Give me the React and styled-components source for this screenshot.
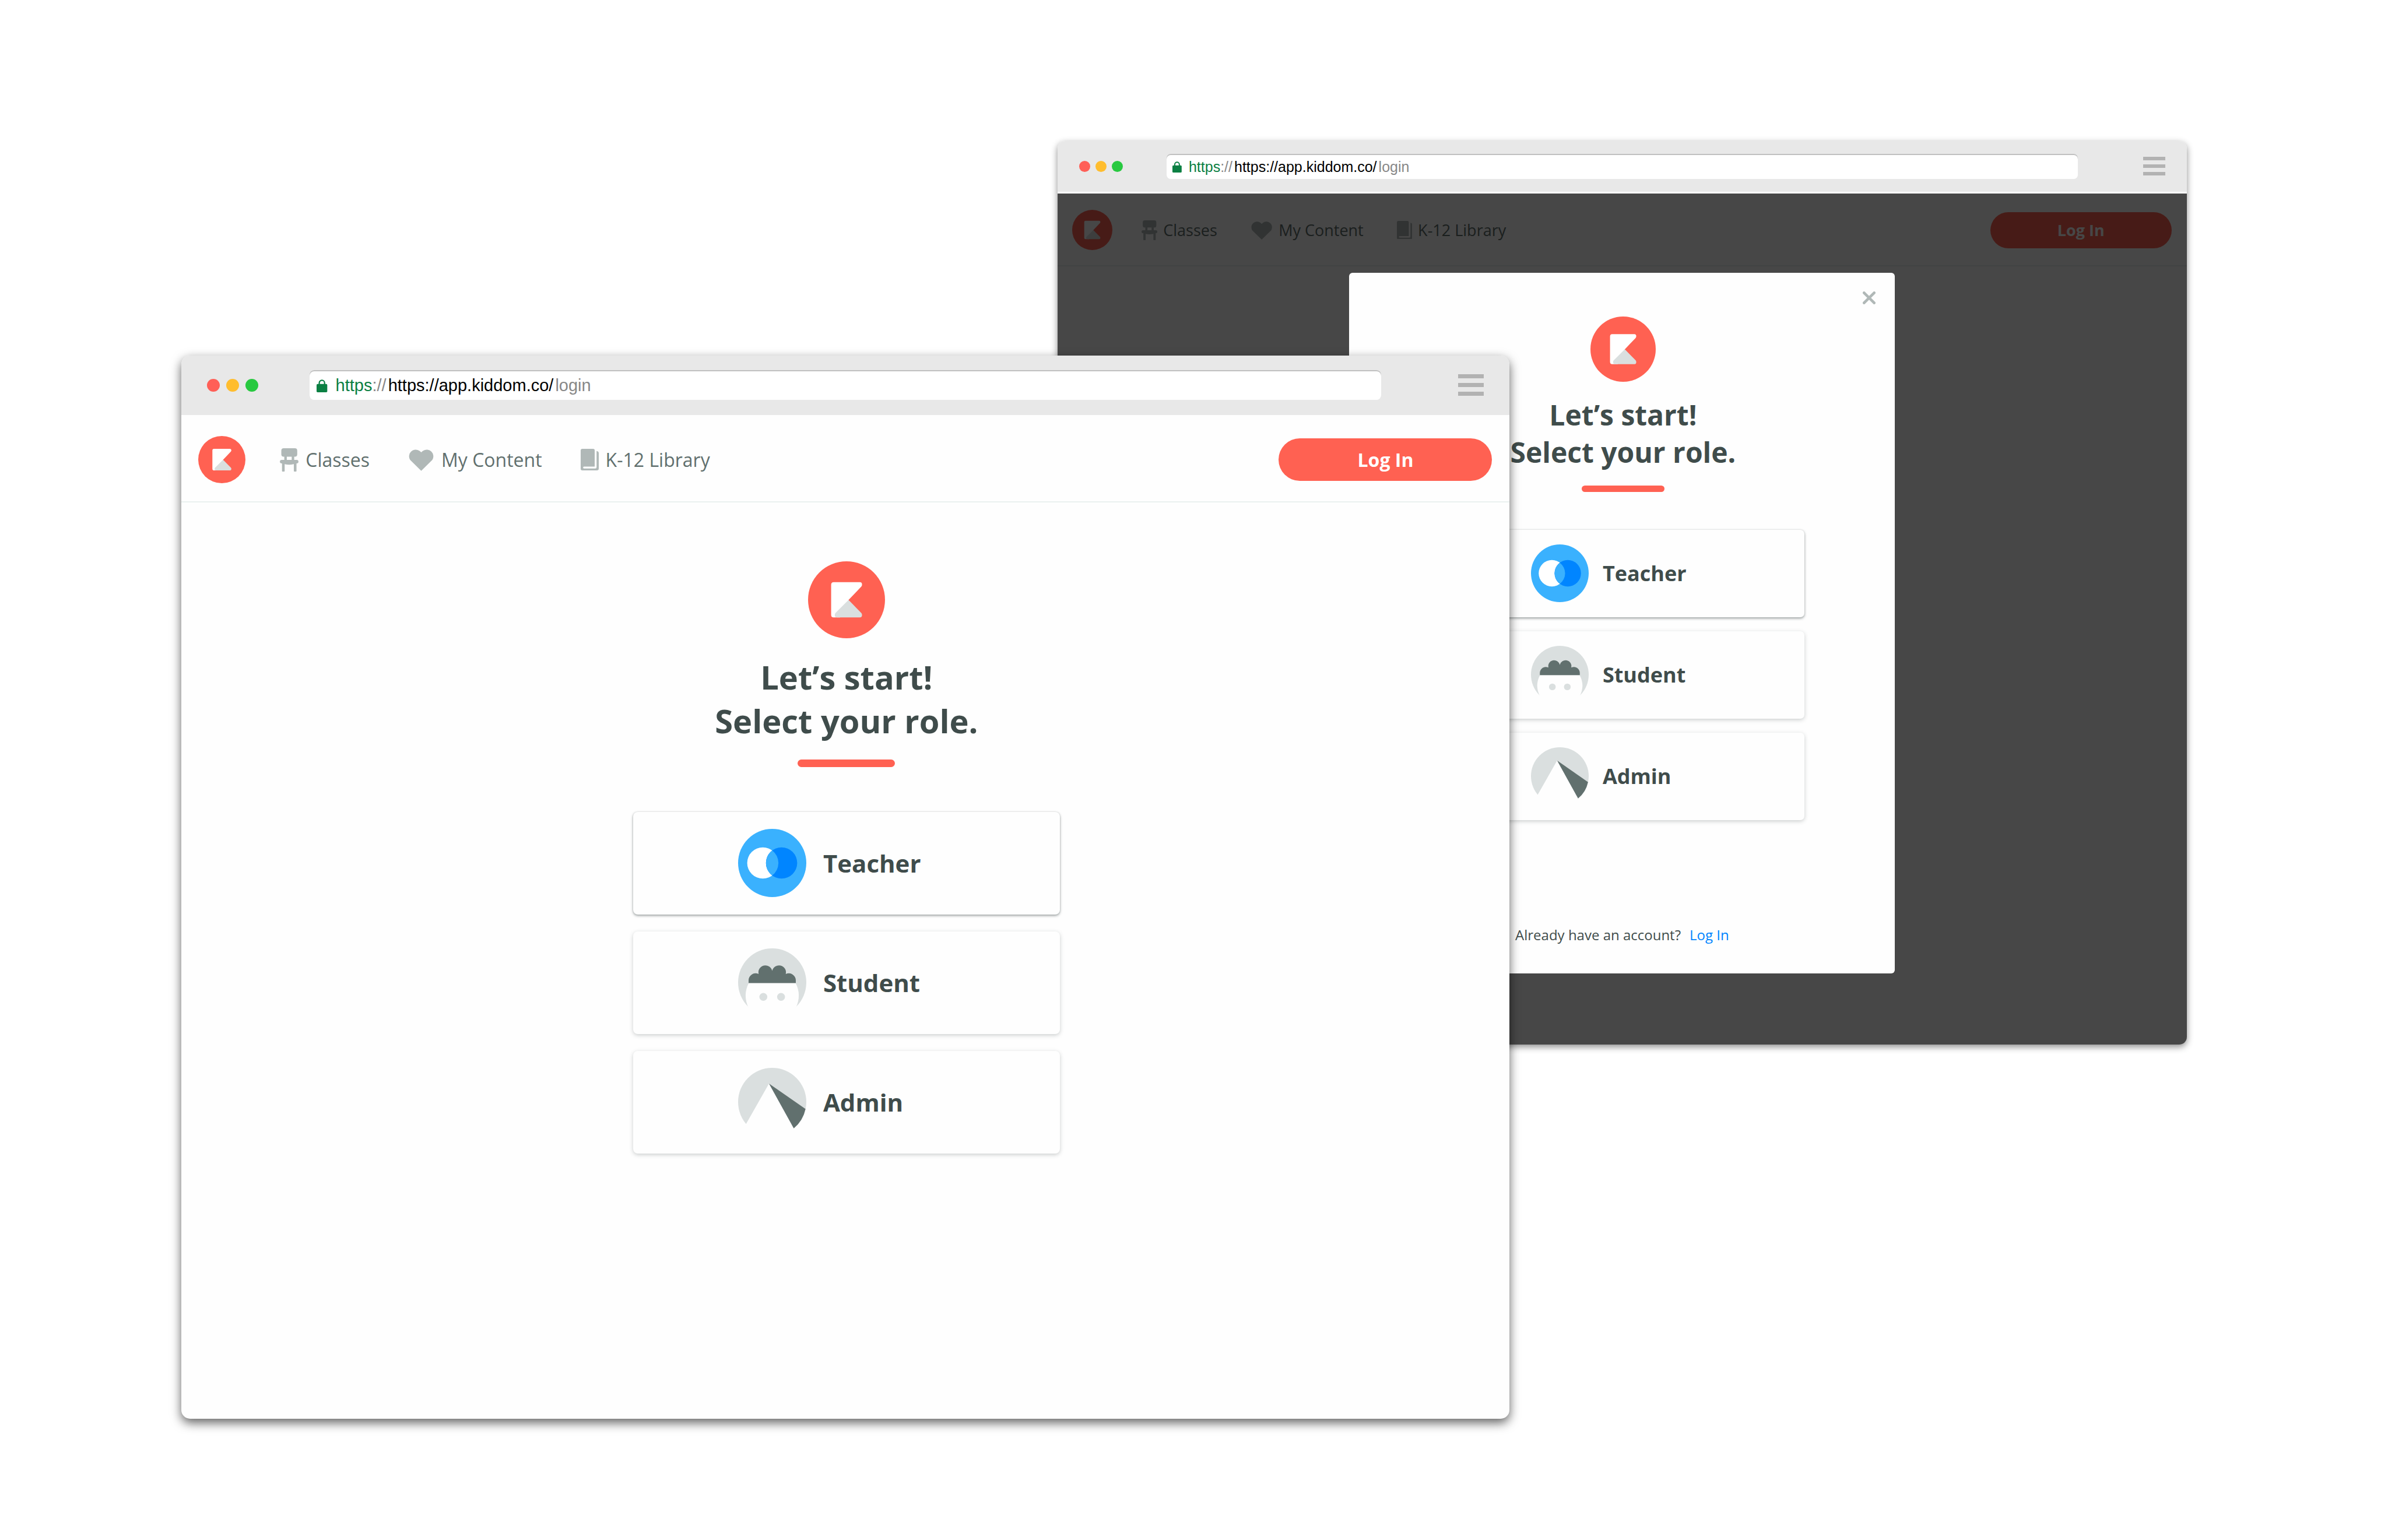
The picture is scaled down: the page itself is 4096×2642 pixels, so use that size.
import React from "react";
import styled, { createGlobalStyle, ThemeProvider } from "styled-components";

const color = {
  brand: "#ff6152",
  ink: "#3f4c4b",
  slate: "#61706e",
  mist: "#b0b8b7",
  pale: "#dadfdf",
  line: "#eaf1f0",
  sky: "#3ab1fe",
  blue: "#0085ff",
};

/* Two sizes of the same browser window: the one in front and the one behind. */
const large = {
  radius: 15,
  shadow: "0 7px 18px rgba(0, 0, 0, 0.62)",
  chrome: { height: 102, pad: 44, side: 176, dot: 22, gap: 11, bar: 7 },
  url: { height: 51, radius: 8, font: 29, lock: 22, pad: 12, gap: 14 },
  header: { height: 150, left: 29, right: 30, logo: 81, font: 32, lead: 59, gap: 66, inner: 12 },
  login: { width: 366, height: 73 },
  icon: 1,
  mark: 132,
  title: { font: 56, line: 75, gap: 29 },
  rule: { width: 167, height: 13 },
  role: { width: 732, height: 176, gap: 29, before: 77, pad: 180, icon: 117, font: 42, radius: 8 },
  top: 101,
};

const small = {
  radius: 13,
  shadow: "0 4px 12px rgba(0, 0, 0, 0.45)",
  chrome: { height: 87, pad: 37, side: 150, dot: 19, gap: 9, bar: 6 },
  url: { height: 43, radius: 7, font: 25, lock: 19, pad: 10, gap: 12 },
  header: { height: 128, left: 25, right: 26, logo: 69, font: 27, lead: 50, gap: 57, inner: 10 },
  login: { width: 311, height: 62 },
  icon: 0.85,
  mark: 112,
  title: { font: 48, line: 64, gap: 25 },
  rule: { width: 142, height: 11 },
  role: { width: 622, height: 150, gap: 24, before: 65, pad: 153, icon: 99, font: 36, radius: 7 },
  top: 75,
};

const GlobalStyle = createGlobalStyle`
  *, *::before, *::after { box-sizing: border-box; }
  body {
    margin: 0;
    background: #fff;
    color: ${color.ink};
    font-family: "Open Sans", "Noto Sans", sans-serif;
  }
  button { font: inherit; color: inherit; border: 0; cursor: pointer; }
  a { text-decoration: none; }
  svg { display: block; flex: none; }
`;

const Stage = styled.main`
  position: relative;
  min-height: 100vh;
  overflow: hidden;
`;

const WindowFrame = styled.section`
  position: absolute;
  left: ${(p) => p.$left};
  top: ${(p) => p.$top};
  width: ${(p) => p.$width};
  min-height: ${(p) => p.$height};
  display: flex;
  flex-direction: column;
  overflow: hidden;
  border-radius: ${(p) => p.theme.radius}px;
  background: #fefefe;
  box-shadow: ${(p) => p.theme.shadow};
`;

const Chrome = styled.div`
  display: grid;
  grid-template-columns: ${(p) => p.theme.chrome.side}px 1fr ${(p) => p.theme.chrome.side}px;
  align-items: center;
  height: ${(p) => p.theme.chrome.height}px;
  padding: 0 ${(p) => p.theme.chrome.pad}px;
  background: #e8e8e8;
`;

const Dots = styled.div`
  display: flex;
  gap: ${(p) => p.theme.chrome.gap}px;
`;

const Dot = styled.span`
  width: ${(p) => p.theme.chrome.dot}px;
  height: ${(p) => p.theme.chrome.dot}px;
  border-radius: 50%;
  background: ${(p) => p.$fill};
`;

const AddressBar = styled.div`
  display: flex;
  align-items: center;
  gap: ${(p) => p.theme.url.gap}px;
  height: ${(p) => p.theme.url.height}px;
  padding: 2px ${(p) => p.theme.url.pad}px 0;
  border-radius: ${(p) => p.theme.url.radius}px;
  background: #fff;
  box-shadow: inset 0 2px 0 #c0c0c0;
  font-family: "Liberation Sans", Arial, sans-serif;
  font-size: ${(p) => p.theme.url.font}px;
  line-height: 1;
  white-space: nowrap;
`;

const Url = styled.span`
  display: flex;
  gap: 3px;
  color: #000;
`;

const Scheme = styled.span`
  color: #0b8043;
`;

const Faint = styled.span`
  color: #888;
`;

const MenuButton = styled.button`
  justify-self: end;
  display: grid;
  gap: ${(p) => p.theme.chrome.bar + 1}px;
  width: ${(p) => p.theme.chrome.dot * 2}px;
  padding: 0;
  background: none;
`;

const MenuBar = styled.span`
  height: ${(p) => p.theme.chrome.bar}px;
  background: #b2b2b2;
`;

const Page = styled.div`
  position: relative;
  flex: 1;
  display: flex;
  flex-direction: column;
`;

const Header = styled.header`
  display: flex;
  align-items: center;
  height: ${(p) => p.theme.header.height}px;
  padding: 6px ${(p) => p.theme.header.right}px 0 ${(p) => p.theme.header.left}px;
  border-bottom: 2px solid ${color.line};
`;

const Nav = styled.nav`
  flex: 1;
  display: flex;
  gap: ${(p) => p.theme.header.gap}px;
  margin-left: ${(p) => p.theme.header.lead}px;
`;

const NavLink = styled.a`
  display: flex;
  align-items: center;
  gap: ${(p) => p.theme.header.inner}px;
  color: ${color.slate};
  font-size: ${(p) => p.theme.header.font}px;
  white-space: nowrap;
`;

const LoginButton = styled.button`
  width: ${(p) => p.theme.login.width}px;
  height: ${(p) => p.theme.login.height}px;
  padding: 0;
  border-radius: 999px;
  background: ${color.brand};
  && {
    color: #fff;
    font-size: ${(p) => p.theme.header.font}px;
    font-weight: 700;
  }
`;

const Picker = styled.div`
  display: flex;
  flex-direction: column;
  align-items: center;
  padding: ${(p) => p.theme.top}px 0 0 3px;
`;

const Title = styled.h1`
  margin: ${(p) => p.theme.title.gap}px 0;
  font-size: ${(p) => p.theme.title.font}px;
  line-height: ${(p) => p.theme.title.line}px;
  font-weight: 700;
  text-align: center;
`;

const Rule = styled.span`
  width: ${(p) => p.theme.rule.width}px;
  height: ${(p) => p.theme.rule.height}px;
  border-radius: 7px;
  background: ${color.brand};
`;

const RoleList = styled.div`
  display: grid;
  gap: ${(p) => p.theme.role.gap}px;
  width: ${(p) => p.theme.role.width}px;
  max-width: 100%;
  margin-top: ${(p) => p.theme.role.before}px;
`;

const RoleCard = styled.button`
  display: flex;
  align-items: center;
  gap: ${(p) => p.theme.role.gap}px;
  height: ${(p) => p.theme.role.height}px;
  padding: 0 0 0 ${(p) => p.theme.role.pad}px;
  border-radius: ${(p) => p.theme.role.radius}px;
  background: #fefefe;
  box-shadow: ${(p) =>
    p.$active
      ? "0 2px 4px rgba(63, 76, 75, 0.5), 0 0 3px rgba(63, 76, 75, 0.15)"
      : "0 2px 7px rgba(63, 76, 75, 0.28)"};
  && {
    font-size: ${(p) => p.theme.role.font}px;
    font-weight: 700;
  }
`;

const Overlay = styled.div`
  position: absolute;
  inset: 3px 0 0;
  display: flex;
  align-items: flex-start;
  justify-content: center;
  padding-top: 136px;
  background: rgba(0, 0, 0, 0.72);
`;

const Dialog = styled.div`
  position: relative;
  width: 936px;
  max-width: 100%;
  padding-bottom: 50px;
  border-radius: 6px;
  background: #fefefe;
`;

const CloseButton = styled.button`
  position: absolute;
  top: 32px;
  right: 33px;
  padding: 0;
  background: none;
`;

const SignIn = styled.p`
  display: flex;
  justify-content: center;
  gap: 15px;
  margin: 180px 0 0;
  font-size: 24px;
  line-height: 33px;
`;

const SignInLink = styled.a`
  color: ${color.blue};
`;

function Logo({ size }) {
  return (
    <svg width={size} height={size} viewBox="0 0 144 144" role="img" aria-label="Kiddom">
      <circle cx="72" cy="72" r="72" fill={color.brand} />
      <path
        d="M48 39H97Q101 39 101 43.500Q101 46 99.500 47.500L75.800 72.300L60 105H48Q43.200 105 43.200 100V44Q43.200 39 48 39Z"
        fill="#fff"
      />
      <path
        d="M75.800 72.300L99.500 96.500Q101 98 101 100.500Q101 105 97 105H54.500Q50 105 50 100.500Q50 98 51.500 96.500Z"
        fill={color.pale}
      />
    </svg>
  );
}

function LockIcon({ size }) {
  return (
    <svg width={(size * 20) / 24} height={size} viewBox="0 0 20 24" aria-hidden="true">
      <path d="M5 10V6.500a5 5 0 0 1 10 0V10" fill="none" stroke="#0b8043" strokeWidth="2.400" />
      <rect y="8.500" width="20" height="15.500" rx="2" fill="#0b8043" />
    </svg>
  );
}

function ChairIcon({ scale }) {
  return (
    <svg width={32 * scale} height={40 * scale} viewBox="0 0 35 44" fill={color.mist} aria-hidden="true">
      <rect x="2.700" width="30" height="16" rx="4.500" />
      <path d="M8.300 15H13V23H8.300ZM22.300 15H27V23H22.300Z" />
      <path d="M3.300 22H31.700A3.300 3.300 0 0 1 31.700 28.600Q28 28.800 26 30Q17.500 32 9 30Q7 28.800 3.300 28.600A3.300 3.300 0 0 1 3.300 22Z" />
      <path d="M4 27H9V43Q9 44 8 44H5Q4 44 4 43ZM26.300 27H31.300V43Q31.300 44 30.300 44H27.300Q26.300 44 26.300 43Z" />
    </svg>
  );
}

function HeartIcon({ scale }) {
  return (
    <svg width={45 * scale} height={38 * scale} viewBox="0 0 49.400 41" fill={color.mist} aria-hidden="true">
      <path d="M24.700 41L3.800 20.500A12.500 12.500 0 0 1 21 3.200Q23 4.500 24.700 6.300Q26.400 4.500 28.400 3.200A12.500 12.500 0 0 1 45.600 20.500Z" />
    </svg>
  );
}

function BookIcon({ scale }) {
  return (
    <svg width={31 * scale} height={37 * scale} viewBox="0 0 33.500 40" fill={color.mist} aria-hidden="true">
      <path d="M3 0H23Q26 0 26 3V33H6Q4.500 33 4.500 34.700Q4.500 36.500 6 36.500H27Q29.500 36.500 29.500 34V4Q33.500 4.500 33.500 8V36.500Q33.500 40 30 40H3Q0 40 0 37V3Q0 0 3 0Z" />
    </svg>
  );
}

function TeacherIcon({ size }) {
  return (
    <svg width={size} height={size} viewBox="0 0 128 128" aria-hidden="true">
      <circle cx="64" cy="64" r="64" fill={color.sky} />
      <circle cx="46.400" cy="64" r="29.300" fill="#fff" />
      <circle cx="81.600" cy="64" r="29.300" fill={color.blue} />
      <path d="M64 40.600A29.300 29.300 0 0 1 64 87.400A29.300 29.300 0 0 1 64 40.600Z" fill={color.sky} />
    </svg>
  );
}

function StudentIcon({ size }) {
  return (
    <svg width={size} height={size} viewBox="0 0 128 128" aria-hidden="true">
      <circle cx="64" cy="64" r="64" fill={color.pale} />
      <path d="M20 65H108A50 50 0 0 1 109 110L100 129H28L19 110A50 50 0 0 1 20 65Z" fill="#fefefe" />
      <path
        d="M19.700 65V60A13.300 13.300 0 0 1 38.500 48A13 13 0 0 1 64 42A13 13 0 0 1 89.500 48A13.300 13.300 0 0 1 108.300 60V65Z"
        fill={color.slate}
      />
      <circle cx="47.400" cy="91" r="7.400" fill={color.pale} />
      <circle cx="80.600" cy="91" r="7.400" fill={color.pale} />
    </svg>
  );
}

function AdminIcon({ size }) {
  return (
    <svg width={size} height={size} viewBox="0 0 128 128" aria-hidden="true">
      <circle cx="64" cy="64" r="64" fill={color.pale} />
      <path d="M58 29.500L2 128H120L104.500 113.500Z" fill="#fefefe" />
      <path d="M58 29.500L126.500 77.200A64 64 0 0 1 104.500 113.500Z" fill={color.slate} />
    </svg>
  );
}

const roles = [
  { name: "Teacher", Icon: TeacherIcon, active: true },
  { name: "Student", Icon: StudentIcon },
  { name: "Admin", Icon: AdminIcon },
];

const links = [
  { name: "Classes", Icon: ChairIcon },
  { name: "My Content", Icon: HeartIcon },
  { name: "K-12 Library", Icon: BookIcon },
];

function RolePicker({ size }) {
  return (
    <Picker>
      <Logo size={size.mark} />
      <Title>
        Let’s start!
        <br />
        Select your role.
      </Title>
      <Rule />
      <RoleList>
        {roles.map(({ name, Icon, active }) => (
          <RoleCard key={name} type="button" $active={active}>
            <Icon size={size.role.icon} />
            {name}
          </RoleCard>
        ))}
      </RoleList>
    </Picker>
  );
}

function BrowserWindow({ size, place, children }) {
  return (
    <ThemeProvider theme={size}>
      <WindowFrame $left={place.left} $top={place.top} $width={place.width} $height={place.height}>
        <Chrome>
          <Dots>
            <Dot $fill="#ff5f57" />
            <Dot $fill="#ffbd2e" />
            <Dot $fill="#28c940" />
          </Dots>
          <AddressBar>
            <LockIcon size={size.url.lock} />
            <Url>
              <span>
                <Scheme>https</Scheme>
                <Faint>://</Faint>
              </span>
              <span>https://app.kiddom.co/</span>
              <Faint>login</Faint>
            </Url>
          </AddressBar>
          <MenuButton type="button" aria-label="Menu">
            <MenuBar />
            <MenuBar />
            <MenuBar />
          </MenuButton>
        </Chrome>
        <Page>
          <Header>
            <Logo size={size.header.logo} />
            <Nav>
              {links.map(({ name, Icon }) => (
                <NavLink key={name} href="#">
                  <Icon scale={size.icon} />
                  {name}
                </NavLink>
              ))}
            </Nav>
            <LoginButton type="button">Log In</LoginButton>
          </Header>
          {children}
        </Page>
      </WindowFrame>
    </ThemeProvider>
  );
}

export default function App() {
  return (
    <>
      <GlobalStyle />
      <Stage>
        <BrowserWindow
          size={small}
          place={{ left: "44.29%", top: "9.15%", width: "47.28%", height: "58.67%" }}
        >
          <Overlay>
            <Dialog role="dialog" aria-label="Select your role">
              <CloseButton type="button" aria-label="Close">
                <svg width="22" height="22" viewBox="0 0 22 22" aria-hidden="true">
                  <path
                    d="M2.300 2.300L19.700 19.700M19.700 2.300L2.300 19.700"
                    stroke={color.mist}
                    strokeWidth="4.600"
                    strokeLinecap="round"
                  />
                </svg>
              </CloseButton>
              <RolePicker size={small} />
              <SignIn>
                Already have an account?
                <SignInLink href="#">Log In</SignInLink>
              </SignIn>
            </Dialog>
          </Overlay>
        </BrowserWindow>
        <BrowserWindow
          size={large}
          place={{ left: "7.6%", top: "23.08%", width: "55.62%", height: "69.04%" }}
        >
          <RolePicker size={large} />
        </BrowserWindow>
      </Stage>
    </>
  );
}
